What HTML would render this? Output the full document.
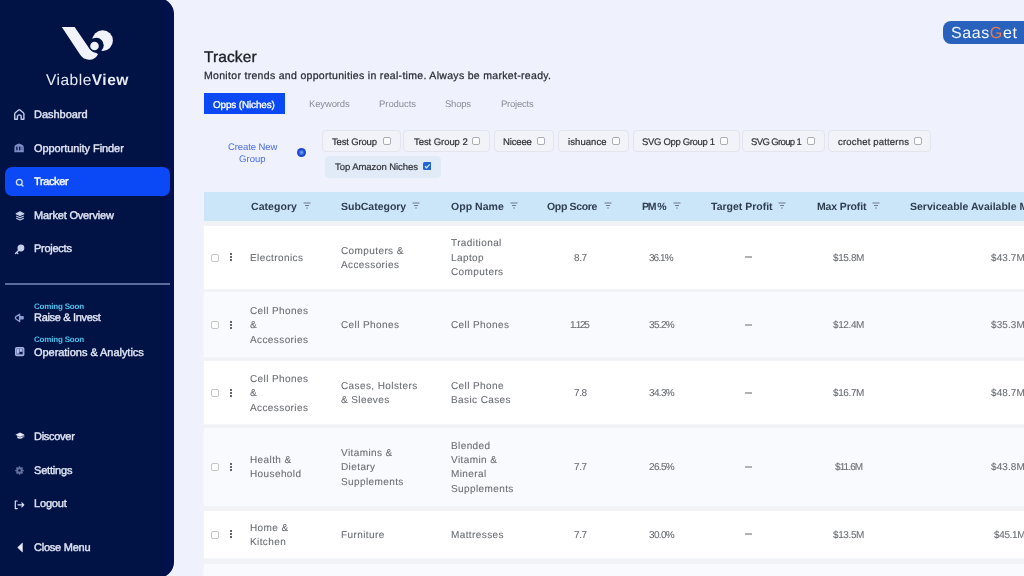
<!DOCTYPE html><html><head><meta charset="utf-8"><style>
*{margin:0;padding:0;box-sizing:border-box}
html,body{width:1024px;height:576px;overflow:hidden}
body{background:#eff2fd;font-family:"Liberation Sans",sans-serif;position:relative;text-rendering:geometricPrecision}
.t{position:absolute;white-space:nowrap;will-change:transform}
#sb{position:absolute;left:0;top:-2px;width:174px;height:580px;background:linear-gradient(90deg,#011245 0,#011245 158px,#030f52 174px);border-radius:0 16px 16px 0}
.nav{color:#e1e5f4;-webkit-text-stroke:0.4px #e1e5f4}
.cs{color:#4cc3ee}
.ic{position:absolute}
.hd{color:#2e3d4f}
.cell{color:#686b70;-webkit-text-stroke:0.08px #686b70}
.chip{position:absolute;height:22px;border:1px solid #e2e5ee;border-radius:4px;background:#f1f3f9}
.cb{position:absolute;width:8.2px;height:8.2px;border:1px solid #a9adb4;border-radius:2px;background:#fff}
.row{position:absolute;left:204px;width:820px}
.kb{position:absolute;width:2px}
.kb i{display:block;width:2.1px;height:2.1px;background:#333;border-radius:50%;margin-bottom:0.95px}
</style></head><body>
<div id="sb"></div>
<div style="position:absolute;left:5px;top:167px;width:165px;height:29px;background:#0b48f6;border-radius:7px"></div>
<div style="position:absolute;left:5px;top:283px;width:165px;height:1.5px;background:#5a6b9e"></div>
<svg class="ic" style="left:56px;top:22px" width="64" height="42" viewBox="0 0 64 42">
<path d="M5.8 5.1 L18.6 5.1 L34 27.5 L42 32 C40.5 35.8 37 37.8 33 37.8 C29.5 37.8 26.3 36 24 32.6 Z" fill="#f2f3fa"/>
<circle cx="46.6" cy="18.6" r="10.3" fill="#f2f3fa"/>
<circle cx="40.3" cy="23.2" r="7.4" fill="#011245"/>
<circle cx="38.5" cy="24" r="4.3" fill="#f2f3fa"/>
</svg>
<div class="t" style="left:46.4px;top:73.0px;font-size:15.5px;line-height:15.5px;color:#e8eaf6;letter-spacing:0.5px">Viable<b>View</b></div>
<svg class="ic" style="left:13px;top:108px" width="13" height="13" viewBox="0 0 13 13" fill="none" stroke="#c3cbea" stroke-width="1.4" stroke-linejoin="round" stroke-linecap="round">
<path d="M1.7 11.2 V5.9 Q1.7 5.2 2.3 4.7 L5.6 2 Q6.3 1.5 7 2 L10.3 4.7 Q10.9 5.2 10.9 5.9 V11.2 H8.2 V8.7 C8.2 7.6 7.4 6.9 6.3 6.9 C5.2 6.9 4.4 7.6 4.4 8.7 V11.2 Z"/></svg>
<svg class="ic" style="left:14px;top:143px" width="11" height="10" viewBox="0 0 11 10">
<path d="M0.4 9.2 V4.2 Q0.4 2.2 2.4 1.6 L5 0.4 L7.6 1.6 Q9.8 2.2 9.8 4.2 V9.2 Z" fill="#7d8cc4"/>
<rect x="2.2" y="3.4" width="1.4" height="4" rx="0.7" fill="#0a1a55"/><rect x="5" y="3.4" width="1.4" height="4" rx="0.7" fill="#0a1a55"/><rect x="7.4" y="3.6" width="1.1" height="3.6" rx="0.5" fill="#5a6aa8"/></svg>
<svg class="ic" style="left:15.2px;top:178px" width="10" height="10" viewBox="0 0 10 10" fill="none" stroke="#d5e0ff" stroke-width="1.35">
<circle cx="4.3" cy="4.2" r="2.9"/><path d="M6.4 6.4 L8 8" stroke-linecap="round"/></svg>
<svg class="ic" style="left:15px;top:211px" width="10" height="10" viewBox="0 0 10 10" fill="none" stroke="#c9d0ea" stroke-width="1.2" stroke-linejoin="round">
<path d="M5 0.9 L8.8 2.7 L5 4.5 L1.2 2.7 Z" fill="#c9d0ea"/><path d="M1.2 5 L5 6.8 L8.8 5"/><path d="M1.2 7.2 L5 9 L8.8 7.2"/></svg>
<svg class="ic" style="left:14px;top:244px" width="11" height="11" viewBox="0 0 11 11" fill="none" stroke="#c9d0ea" stroke-width="1.3" stroke-linecap="round">
<circle cx="6.9" cy="4" r="2.8" fill="#c9d0ea"/><path d="M5 6 L1.5 9.5 M2.6 8.4 L3.8 9.5"/></svg>
<svg class="ic" style="left:12px;top:310px" width="15" height="16" viewBox="0 0 15 16">
<path d="M7.6 4.3 L3.9 6.6 Q2.7 7.8 3.9 9 L7.6 11.5 Z" fill="none" stroke="#8e9bd2" stroke-width="1.4" stroke-linejoin="round"/><rect x="7.4" y="6.1" width="4.4" height="3.5" rx="0.8" fill="#8e9bd2"/></svg>
<svg class="ic" style="left:14.8px;top:347px" width="10" height="10" viewBox="0 0 10 10">
<rect x="0" y="0" width="9.4" height="9.2" rx="1.8" fill="#a9b4dd"/><rect x="1.3" y="1.3" width="6.9" height="6.5" rx="0.8" fill="#6675b0"/>
<rect x="2.1" y="1.8" width="1.7" height="4.6" rx="0.85" fill="#c3cdf0"/><rect x="5" y="1.8" width="1.8" height="2.8" rx="0.9" fill="#c3cdf0"/><rect x="4.5" y="5.1" width="3" height="2" rx="0.6" fill="#0a1650"/></svg>
<svg class="ic" style="left:14.5px;top:432px" width="10" height="8" viewBox="0 0 10 8">
<path d="M5 0.6 L9.6 2.8 L5 5 L0.4 2.8 Z" fill="#e6eaf7"/><path d="M2.3 4.1 V6 Q5 7.6 7.7 6 V4.1 L5 5.4 Z" fill="#e6eaf7"/><path d="M8.8 3.2 V5.4" stroke="#e6eaf7" stroke-width="0.8"/></svg>
<svg class="ic" style="left:14.6px;top:465.8px" width="9" height="9" viewBox="0 0 9 9">
<g fill="#65729f"><circle cx="4.5" cy="4.5" r="3.2"/><rect x="3.7" y="0.2" width="1.6" height="8.6" rx="0.5"/><rect x="0.2" y="3.7" width="8.6" height="1.6" rx="0.5"/><rect x="3.7" y="0.2" width="1.6" height="8.6" rx="0.5" transform="rotate(45 4.5 4.5)"/><rect x="3.7" y="0.2" width="1.6" height="8.6" rx="0.5" transform="rotate(-45 4.5 4.5)"/></g>
<circle cx="4.5" cy="4.5" r="1.3" fill="#011245"/></svg>
<svg class="ic" style="left:13.5px;top:499.5px" width="11" height="10" viewBox="0 0 11 10" fill="none" stroke="#dfe4f4" stroke-width="1.2" stroke-linecap="round" stroke-linejoin="round">
<path d="M3.2 1 H1.3 V8.6 H3.2"/><path d="M4 4.8 H9.8 M7.8 2.8 L9.8 4.8 L7.8 6.8"/></svg>
<svg class="ic" style="left:16.5px;top:542.2px" width="7" height="11" viewBox="0 0 7 11"><path d="M5.4 1.1 V10 L0.7 5.5 Z" fill="#e8ecf8" stroke="#e8ecf8" stroke-width="0.6" stroke-linejoin="round"/></svg>
<div class="t nav" style="left:34.00px;top:110.00px;font-size:11px;line-height:11px;letter-spacing:-0.027px;">Dashboard</div>
<div class="t nav" style="left:34.00px;top:144.00px;font-size:11px;line-height:11px;letter-spacing:-0.077px;">Opportunity Finder</div>
<div class="t nav" style="left:34.00px;top:177.00px;font-size:11px;line-height:11px;letter-spacing:-0.379px;color:#fff;-webkit-text-stroke-color:#fff">Tracker</div>
<div class="t nav" style="left:34.00px;top:211.00px;font-size:11px;line-height:11px;letter-spacing:-0.182px;">Market Overview</div>
<div class="t nav" style="left:34.00px;top:244.00px;font-size:11px;line-height:11px;letter-spacing:-0.262px;">Projects</div>
<div class="t nav" style="left:34.00px;top:313.00px;font-size:11px;line-height:11px;letter-spacing:-0.317px;">Raise &amp; Invest</div>
<div class="t nav" style="left:34.00px;top:348.00px;font-size:11px;line-height:11px;letter-spacing:-0.044px;">Operations &amp; Analytics</div>
<div class="t nav" style="left:34.00px;top:432.00px;font-size:11px;line-height:11px;letter-spacing:-0.284px;">Discover</div>
<div class="t nav" style="left:34.00px;top:466.00px;font-size:11px;line-height:11px;letter-spacing:-0.192px;">Settings</div>
<div class="t nav" style="left:34.00px;top:499.00px;font-size:11px;line-height:11px;letter-spacing:-0.17px;">Logout</div>
<div class="t nav" style="left:34.00px;top:543.00px;font-size:11px;line-height:11px;letter-spacing:-0.233px;">Close Menu</div>
<div class="t cs" style="left:33.75px;top:303.00px;font-size:8px;line-height:8px;letter-spacing:-0.184px;font-weight:bold;">Coming Soon</div>
<div class="t cs" style="left:33.75px;top:336.00px;font-size:8px;line-height:8px;letter-spacing:-0.184px;font-weight:bold;">Coming Soon</div>
<div class="t " style="left:204.40px;top:50.00px;font-size:15.5px;line-height:15.5px;letter-spacing:0.107px;color:#1d1f24;-webkit-text-stroke:0.35px #1d1f24">Tracker</div>
<div class="t " style="left:204.00px;top:71.00px;font-size:10.5px;line-height:10.5px;letter-spacing:0.312px;color:#2a2d33;-webkit-text-stroke:0.25px #2a2d33">Monitor trends and opportunities in real-time. Always be market-ready.</div>
<div style="position:absolute;left:204px;top:93px;width:81px;height:21px;background:#0b48f6"></div>
<div class="t " style="left:213.00px;top:101.00px;font-size:9.9px;line-height:9.9px;letter-spacing:-0.106px;color:#fff;-webkit-text-stroke:0.35px #fff">Opps (Niches)</div>
<div class="t " style="left:309.00px;top:100.00px;font-size:9.5px;line-height:9.5px;letter-spacing:-0.145px;color:#8a8e96">Keywords</div>
<div class="t " style="left:378.90px;top:100.00px;font-size:9.5px;line-height:9.5px;letter-spacing:-0.055px;color:#8a8e96">Products</div>
<div class="t " style="left:445.30px;top:100.00px;font-size:9.5px;line-height:9.5px;letter-spacing:-0.246px;color:#8a8e96">Shops</div>
<div class="t " style="left:501.00px;top:100.00px;font-size:9.5px;line-height:9.5px;letter-spacing:-0.223px;color:#8a8e96">Projects</div>
<div class="t " style="left:227.70px;top:143.00px;font-size:9.5px;line-height:9.5px;letter-spacing:-0.099px;color:#4a6de0">Create New</div>
<div class="t " style="left:238.80px;top:155.00px;font-size:9.5px;line-height:9.5px;letter-spacing:0.05px;color:#4a6de0">Group</div>
<div style="position:absolute;left:296.8px;top:148.15px;width:8.8px;height:8.8px;border-radius:50%;background:radial-gradient(circle,#7aa6f5 0,#4d7fe8 1.6px,#1d48d0 3px)"></div>
<div class="chip" style="left:322.4px;top:130.2px;width:78.6px"></div>
<div class="t " style="left:332.00px;top:138.00px;font-size:9.5px;line-height:9.5px;letter-spacing:-0.163px;color:#2f3136;-webkit-text-stroke:0.2px #2f3136">Test Group</div>
<div class="cb" style="left:383px;top:137.3px"></div>
<div class="chip" style="left:403.4px;top:130.2px;width:86.9px"></div>
<div class="t " style="left:413.70px;top:138.00px;font-size:9.5px;line-height:9.5px;letter-spacing:-0.063px;color:#2f3136;-webkit-text-stroke:0.2px #2f3136">Test Group 2</div>
<div class="cb" style="left:471.8px;top:137.3px"></div>
<div class="chip" style="left:493.7px;top:130.2px;width:60.1px"></div>
<div class="t " style="left:503.00px;top:138.00px;font-size:9.5px;line-height:9.5px;letter-spacing:-0.155px;color:#2f3136;-webkit-text-stroke:0.2px #2f3136">Niceee</div>
<div class="cb" style="left:537.2px;top:137.3px"></div>
<div class="chip" style="left:558.2px;top:130.2px;width:70.8px"></div>
<div class="t " style="left:568.00px;top:138.00px;font-size:9.5px;line-height:9.5px;letter-spacing:0.082px;color:#2f3136;-webkit-text-stroke:0.2px #2f3136">ishuance</div>
<div class="cb" style="left:612px;top:137.3px"></div>
<div class="chip" style="left:633px;top:130.2px;width:106.8px"></div>
<div class="t " style="left:642.00px;top:138.00px;font-size:9.5px;line-height:9.5px;letter-spacing:-0.33px;color:#2f3136;-webkit-text-stroke:0.2px #2f3136">SVG Opp Group 1</div>
<div class="cb" style="left:719.5px;top:137.3px"></div>
<div class="chip" style="left:741.8px;top:130.2px;width:83.0px"></div>
<div class="t " style="left:750.60px;top:138.00px;font-size:9.5px;line-height:9.5px;letter-spacing:-0.623px;color:#2f3136;-webkit-text-stroke:0.2px #2f3136">SVG Group 1</div>
<div class="cb" style="left:807px;top:137.3px"></div>
<div class="chip" style="left:827.8px;top:130.2px;width:103.1px"></div>
<div class="t " style="left:837.50px;top:138.00px;font-size:9.5px;line-height:9.5px;letter-spacing:0.186px;color:#2f3136;-webkit-text-stroke:0.2px #2f3136">crochet patterns</div>
<div class="cb" style="left:913.7px;top:137.3px"></div>
<div class="chip" style="left:324.8px;top:155.5px;width:116px;background:#e1ebf7;border-color:#e1ebf7"></div>
<div class="t " style="left:334.50px;top:163.00px;font-size:9.5px;line-height:9.5px;letter-spacing:-0.06px;color:#2f3136;-webkit-text-stroke:0.2px #2f3136">Top Amazon Niches</div>
<svg class="ic" style="left:422.8px;top:162.2px" width="8.6" height="8" viewBox="0 0 8.6 8"><rect x="0" y="0" width="8.6" height="8" rx="1.6" fill="#2166d2"/><path d="M2 4.3 L3.6 5.8 L6.6 2.4" fill="none" stroke="#d9f0ff" stroke-width="1.2"/></svg>
<div style="position:absolute;left:204px;top:192px;width:820px;height:29px;background:#cbe5f9"></div>
<div class="t hd" style="left:250.70px;top:202.00px;font-size:10.5px;line-height:10.5px;letter-spacing:0.055px;font-weight:bold;">Category</div>
<svg class="ic" style="left:302.9px;top:201.8px" width="8" height="7" viewBox="0 0 8 7"><path d="M0.5 1H7.5M2 3.5H6M3.2 6H4.8" stroke="#6d7a8a" stroke-width="1.1"/></svg>
<div class="t hd" style="left:341.20px;top:202.00px;font-size:10.5px;line-height:10.5px;letter-spacing:-0.014px;font-weight:bold;">SubCategory</div>
<svg class="ic" style="left:412.3px;top:201.8px" width="8" height="7" viewBox="0 0 8 7"><path d="M0.5 1H7.5M2 3.5H6M3.2 6H4.8" stroke="#6d7a8a" stroke-width="1.1"/></svg>
<div class="t hd" style="left:450.70px;top:202.00px;font-size:10.5px;line-height:10.5px;letter-spacing:0.041px;font-weight:bold;">Opp Name</div>
<svg class="ic" style="left:510px;top:201.8px" width="8" height="7" viewBox="0 0 8 7"><path d="M0.5 1H7.5M2 3.5H6M3.2 6H4.8" stroke="#6d7a8a" stroke-width="1.1"/></svg>
<div class="t hd" style="left:547.40px;top:202.00px;font-size:10.5px;line-height:10.5px;letter-spacing:-0.337px;font-weight:bold;">Opp Score</div>
<svg class="ic" style="left:603.7px;top:201.8px" width="8" height="7" viewBox="0 0 8 7"><path d="M0.5 1H7.5M2 3.5H6M3.2 6H4.8" stroke="#6d7a8a" stroke-width="1.1"/></svg>
<div class="t hd" style="left:642.10px;top:202.00px;font-size:10.5px;line-height:10.5px;letter-spacing:-1.134px;font-weight:bold;">PM %</div>
<svg class="ic" style="left:673.4px;top:201.8px" width="8" height="7" viewBox="0 0 8 7"><path d="M0.5 1H7.5M2 3.5H6M3.2 6H4.8" stroke="#6d7a8a" stroke-width="1.1"/></svg>
<div class="t hd" style="left:711.00px;top:202.00px;font-size:10.5px;line-height:10.5px;letter-spacing:-0.004px;font-weight:bold;">Target Profit</div>
<svg class="ic" style="left:778.4px;top:201.8px" width="8" height="7" viewBox="0 0 8 7"><path d="M0.5 1H7.5M2 3.5H6M3.2 6H4.8" stroke="#6d7a8a" stroke-width="1.1"/></svg>
<div class="t hd" style="left:816.50px;top:202.00px;font-size:10.5px;line-height:10.5px;letter-spacing:-0.14px;font-weight:bold;">Max Profit</div>
<svg class="ic" style="left:872.4px;top:201.8px" width="8" height="7" viewBox="0 0 8 7"><path d="M0.5 1H7.5M2 3.5H6M3.2 6H4.8" stroke="#6d7a8a" stroke-width="1.1"/></svg>
<div class="t hd" style="left:910.30px;top:202.00px;font-size:10.5px;line-height:10.5px;letter-spacing:0px;font-weight:bold;">Serviceable Available M</div>
<div style="position:absolute;left:204px;top:221px;width:820px;height:355px;background:#f1f2f6"></div>
<div class="row" style="top:225.5px;height:63.0px;background:#ffffff;box-shadow:0 0 1.5px 0.5px #ffffff"></div>
<div class="row" style="top:292px;height:64.5px;background:#f9fafd;box-shadow:0 0 1.5px 0.5px #f9fafd"></div>
<div class="row" style="top:361px;height:63px;background:#ffffff;box-shadow:0 0 1.5px 0.5px #ffffff"></div>
<div class="row" style="top:427.5px;height:78.0px;background:#f9fafd;box-shadow:0 0 1.5px 0.5px #f9fafd"></div>
<div class="row" style="top:511px;height:46.5px;background:#ffffff;box-shadow:0 0 1.5px 0.5px #ffffff"></div>
<div class="row" style="top:564px;height:36px;background:#f9fafd;box-shadow:0 0 1.5px 0.5px #f9fafd"></div>
<div class="cb" style="left:211px;top:253.6px;border-color:#c3c5c9"></div>
<div class="kb" style="left:230px;top:253.0px"><i></i><i></i><i></i></div>
<div class="t cell" style="left:250.40px;top:254.00px;font-size:10px;line-height:10px;letter-spacing:0.4px;">Electronics</div>
<div class="t cell" style="left:341.20px;top:247.00px;font-size:10px;line-height:10px;letter-spacing:0.4px;">Computers &amp;</div>
<div class="t cell" style="left:341.20px;top:261.00px;font-size:10px;line-height:10px;letter-spacing:0.4px;">Accessories</div>
<div class="t cell" style="left:450.70px;top:239.00px;font-size:10px;line-height:10px;letter-spacing:0.4px;">Traditional</div>
<div class="t cell" style="left:450.70px;top:254.00px;font-size:10px;line-height:10px;letter-spacing:0.4px;">Laptop</div>
<div class="t cell" style="left:450.70px;top:268.00px;font-size:10px;line-height:10px;letter-spacing:0.4px;">Computers</div>
<div class="t cell" style="left:573.55px;top:254.00px;font-size:10px;line-height:10px;letter-spacing:-0.4px;">8.7</div>
<div class="t cell" style="left:649.40px;top:254.00px;font-size:10px;line-height:10px;letter-spacing:-0.938px;">36.1%</div>
<div style="position:absolute;left:745.2px;top:256px;width:7px;height:2px;background:#b0b2b6"></div>
<div class="t cell" style="left:832.90px;top:254.00px;font-size:10px;line-height:10px;letter-spacing:-0.39px;">$15.8M</div>
<div class="t cell" style="left:991.20px;top:254.00px;font-size:10px;line-height:10px;letter-spacing:0.09px;">$43.7M</div>
<div class="cb" style="left:211px;top:321.1px;border-color:#c3c5c9"></div>
<div class="kb" style="left:230px;top:320.5px"><i></i><i></i><i></i></div>
<div class="t cell" style="left:250.40px;top:307.00px;font-size:10px;line-height:10px;letter-spacing:0.4px;">Cell Phones</div>
<div class="t cell" style="left:250.40px;top:321.00px;font-size:10px;line-height:10px;letter-spacing:0.4px;">&amp;</div>
<div class="t cell" style="left:250.40px;top:336.00px;font-size:10px;line-height:10px;letter-spacing:0.4px;">Accessories</div>
<div class="t cell" style="left:341.20px;top:321.00px;font-size:10px;line-height:10px;letter-spacing:0.4px;">Cell Phones</div>
<div class="t cell" style="left:450.70px;top:321.00px;font-size:10px;line-height:10px;letter-spacing:0.4px;">Cell Phones</div>
<div class="t cell" style="left:570.20px;top:321.00px;font-size:10px;line-height:10px;letter-spacing:-1.305px;">1.125</div>
<div class="t cell" style="left:648.85px;top:321.00px;font-size:10px;line-height:10px;letter-spacing:-0.663px;">35.2%</div>
<div style="position:absolute;left:745.2px;top:324px;width:7px;height:2px;background:#b0b2b6"></div>
<div class="t cell" style="left:832.90px;top:321.00px;font-size:10px;line-height:10px;letter-spacing:-0.39px;">$12.4M</div>
<div class="t cell" style="left:991.20px;top:321.00px;font-size:10px;line-height:10px;letter-spacing:0.09px;">$35.3M</div>
<div class="cb" style="left:211px;top:389.1px;border-color:#c3c5c9"></div>
<div class="kb" style="left:230px;top:388.5px"><i></i><i></i><i></i></div>
<div class="t cell" style="left:250.40px;top:375.00px;font-size:10px;line-height:10px;letter-spacing:0.4px;">Cell Phones</div>
<div class="t cell" style="left:250.40px;top:389.00px;font-size:10px;line-height:10px;letter-spacing:0.4px;">&amp;</div>
<div class="t cell" style="left:250.40px;top:404.00px;font-size:10px;line-height:10px;letter-spacing:0.4px;">Accessories</div>
<div class="t cell" style="left:341.20px;top:382.00px;font-size:10px;line-height:10px;letter-spacing:0.4px;">Cases, Holsters</div>
<div class="t cell" style="left:341.20px;top:396.00px;font-size:10px;line-height:10px;letter-spacing:0.4px;">&amp; Sleeves</div>
<div class="t cell" style="left:450.70px;top:382.00px;font-size:10px;line-height:10px;letter-spacing:0.4px;">Cell Phone</div>
<div class="t cell" style="left:450.70px;top:396.00px;font-size:10px;line-height:10px;letter-spacing:0.4px;">Basic Cases</div>
<div class="t cell" style="left:573.55px;top:389.00px;font-size:10px;line-height:10px;letter-spacing:-0.4px;">7.8</div>
<div class="t cell" style="left:648.85px;top:389.00px;font-size:10px;line-height:10px;letter-spacing:-0.663px;">34.3%</div>
<div style="position:absolute;left:745.2px;top:392px;width:7px;height:2px;background:#b0b2b6"></div>
<div class="t cell" style="left:832.90px;top:389.00px;font-size:10px;line-height:10px;letter-spacing:-0.39px;">$16.7M</div>
<div class="t cell" style="left:991.20px;top:389.00px;font-size:10px;line-height:10px;letter-spacing:0.09px;">$48.7M</div>
<div class="cb" style="left:211px;top:463.1px;border-color:#c3c5c9"></div>
<div class="kb" style="left:230px;top:462.5px"><i></i><i></i><i></i></div>
<div class="t cell" style="left:250.40px;top:456.00px;font-size:10px;line-height:10px;letter-spacing:0.4px;">Health &amp;</div>
<div class="t cell" style="left:250.40px;top:470.00px;font-size:10px;line-height:10px;letter-spacing:0.4px;">Household</div>
<div class="t cell" style="left:341.20px;top:449.00px;font-size:10px;line-height:10px;letter-spacing:0.4px;">Vitamins &amp;</div>
<div class="t cell" style="left:341.20px;top:463.00px;font-size:10px;line-height:10px;letter-spacing:0.4px;">Dietary</div>
<div class="t cell" style="left:341.20px;top:478.00px;font-size:10px;line-height:10px;letter-spacing:0.4px;">Supplements</div>
<div class="t cell" style="left:450.70px;top:442.00px;font-size:10px;line-height:10px;letter-spacing:0.4px;">Blended</div>
<div class="t cell" style="left:450.70px;top:456.00px;font-size:10px;line-height:10px;letter-spacing:0.4px;">Vitamin &amp;</div>
<div class="t cell" style="left:450.70px;top:470.00px;font-size:10px;line-height:10px;letter-spacing:0.4px;">Mineral</div>
<div class="t cell" style="left:450.70px;top:485.00px;font-size:10px;line-height:10px;letter-spacing:0.4px;">Supplements</div>
<div class="t cell" style="left:573.55px;top:463.00px;font-size:10px;line-height:10px;letter-spacing:-0.4px;">7.7</div>
<div class="t cell" style="left:648.85px;top:463.00px;font-size:10px;line-height:10px;letter-spacing:-0.663px;">26.5%</div>
<div style="position:absolute;left:745.2px;top:466px;width:7px;height:2px;background:#b0b2b6"></div>
<div class="t cell" style="left:834.50px;top:463.00px;font-size:10px;line-height:10px;letter-spacing:-0.882px;">$11.6M</div>
<div class="t cell" style="left:991.20px;top:463.00px;font-size:10px;line-height:10px;letter-spacing:0.09px;">$43.8M</div>
<div class="cb" style="left:211px;top:530.6px;border-color:#c3c5c9"></div>
<div class="kb" style="left:230px;top:530.0px"><i></i><i></i><i></i></div>
<div class="t cell" style="left:250.40px;top:524.00px;font-size:10px;line-height:10px;letter-spacing:0.4px;">Home &amp;</div>
<div class="t cell" style="left:250.40px;top:538.00px;font-size:10px;line-height:10px;letter-spacing:0.4px;">Kitchen</div>
<div class="t cell" style="left:341.20px;top:531.00px;font-size:10px;line-height:10px;letter-spacing:0.4px;">Furniture</div>
<div class="t cell" style="left:450.70px;top:531.00px;font-size:10px;line-height:10px;letter-spacing:0.4px;">Mattresses</div>
<div class="t cell" style="left:573.55px;top:531.00px;font-size:10px;line-height:10px;letter-spacing:-0.4px;">7.7</div>
<div class="t cell" style="left:648.85px;top:531.00px;font-size:10px;line-height:10px;letter-spacing:-0.663px;">30.0%</div>
<div style="position:absolute;left:745.2px;top:533px;width:7px;height:2px;background:#b0b2b6"></div>
<div class="t cell" style="left:832.90px;top:531.00px;font-size:10px;line-height:10px;letter-spacing:-0.39px;">$13.5M</div>
<div class="t cell" style="left:993.50px;top:531.00px;font-size:10px;line-height:10px;letter-spacing:-0.37px;">$45.1M</div>
<div style="position:absolute;left:943px;top:21px;width:100px;height:23px;background:#2962bd;border-radius:8px"></div>
<div class="t " style="left:951.00px;top:26.00px;font-size:16px;line-height:16px;letter-spacing:0.591px;color:#f4f7ff">Saas<span style="color:#e57b52">G</span>et</div>
</body></html>
